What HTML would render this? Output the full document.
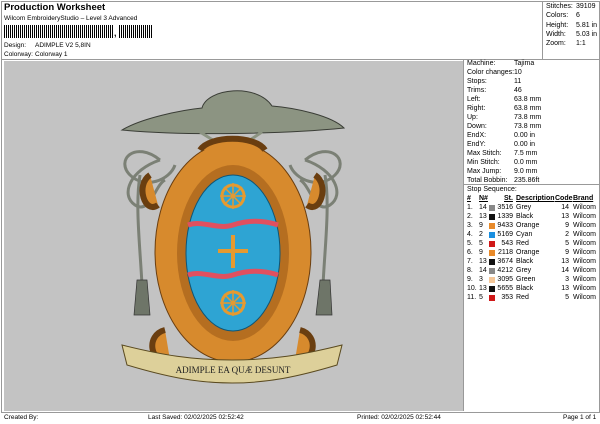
<!DOCTYPE html>
<html><head><meta charset="utf-8"><style>
body{margin:0;width:600px;height:424px;background:#fff;font-family:"Liberation Sans",Arial,sans-serif;position:relative;overflow:hidden;color:#000}
.a{position:absolute;white-space:nowrap}
.s{font-size:6.5px}
.r div{position:absolute;font-size:7px;white-space:nowrap}
.sw{display:inline-block;width:6px;height:6px;vertical-align:-1px}
</style></head><body>
<div class="a" style="left:1px;top:1px;width:597px;height:410px;border:1px solid #999"></div>
<div class="a" style="left:1px;top:59px;width:598px;border-top:1px solid #999"></div>
<div class="a" style="left:542px;top:1px;height:58px;border-left:1px solid #999"></div>
<div class="a" style="left:4px;top:2px;font-size:9.5px;font-weight:bold">Production Worksheet</div>
<div class="a s" style="left:4px;top:15px">Wilcom EmbroideryStudio – Level 3 Advanced</div>
<div class="a" style="left:4px;top:25px;width:109px;height:13px;background:repeating-linear-gradient(90deg,#000 0 1px,#fff 1px 2px,#000 2px 3px,#fff 3px 4px)"></div>
<div class="a" style="left:114px;top:28px;font-size:9px;font-weight:bold">,</div>
<div class="a" style="left:119px;top:25px;width:33px;height:13px;background:repeating-linear-gradient(90deg,#000 0 1px,#fff 1px 2px,#000 2px 3px,#fff 3px 4px)"></div>
<div class="a s" style="left:4px;top:42px">Design:</div><div class="a s" style="left:35px;top:42px">ADIMPLE V2 5,8IN</div>
<div class="a s" style="left:4px;top:51px">Colorway:</div><div class="a s" style="left:35px;top:51px">Colorway 1</div>
<div class="r">
<div style="left:546px;top:3px">Stitches:</div><div style="left:576px;top:3px">39109</div>
<div style="left:546px;top:12px">Colors:</div><div style="left:576px;top:12px">6</div>
<div style="left:546px;top:22px">Height:</div><div style="left:576px;top:22px">5.81 in</div>
<div style="left:546px;top:31px">Width:</div><div style="left:576px;top:31px">5.03 in</div>
<div style="left:546px;top:40px">Zoom:</div><div style="left:576px;top:40px">1:1</div>
</div>
<div class="a" style="left:4px;top:61px;width:459px;height:350px;background:#c3c3c3"></div>
<div class="a" style="left:463px;top:59px;height:352px;border-left:1px solid #999"></div>
<div class="a" style="left:463px;top:184px;width:136px;border-top:1px solid #999"></div>
<div class="a" style="left:1px;top:412px;width:598px;border-top:1px solid #999"></div>
<div class="a s" style="left:4px;top:414px">Created By:</div>
<div class="a s" style="left:148px;top:414px">Last Saved: 02/02/2025 02:52:42</div>
<div class="a s" style="left:357px;top:414px">Printed: 02/02/2025 02:52:44</div>
<div class="a s" style="left:563px;top:414px">Page 1 of 1</div>
<div class="r">
<div style="left:467px;top:60px">Machine:</div><div style="left:514px;top:60px">Tajima</div>
<div style="left:467px;top:69px">Color changes:</div><div style="left:514px;top:69px">10</div>
<div style="left:467px;top:78px">Stops:</div><div style="left:514px;top:78px">11</div>
<div style="left:467px;top:87px">Trims:</div><div style="left:514px;top:87px">46</div>
<div style="left:467px;top:96px">Left:</div><div style="left:514px;top:96px">63.8 mm</div>
<div style="left:467px;top:105px">Right:</div><div style="left:514px;top:105px">63.8 mm</div>
<div style="left:467px;top:114px">Up:</div><div style="left:514px;top:114px">73.8 mm</div>
<div style="left:467px;top:123px">Down:</div><div style="left:514px;top:123px">73.8 mm</div>
<div style="left:467px;top:132px">EndX:</div><div style="left:514px;top:132px">0.00 in</div>
<div style="left:467px;top:141px">EndY:</div><div style="left:514px;top:141px">0.00 in</div>
<div style="left:467px;top:150px">Max Stitch:</div><div style="left:514px;top:150px">7.5 mm</div>
<div style="left:467px;top:159px">Min Stitch:</div><div style="left:514px;top:159px">0.0 mm</div>
<div style="left:467px;top:168px">Max Jump:</div><div style="left:514px;top:168px">9.0 mm</div>
<div style="left:467px;top:177px">Total Bobbin:</div><div style="left:514px;top:177px">235.86ft</div>
<div style="left:467px;top:186px">Stop Sequence:</div>
<div style="left:467px;top:195px;font-weight:bold;text-decoration:underline">#</div>
<div style="left:479px;top:195px;font-weight:bold;text-decoration:underline">N#</div>
<div style="left:504px;top:195px;font-weight:bold;text-decoration:underline">St.</div>
<div style="left:516px;top:195px;font-weight:bold;text-decoration:underline">Description</div>
<div style="left:555px;top:195px;font-weight:bold;text-decoration:underline">Code</div>
<div style="left:573px;top:195px;font-weight:bold;text-decoration:underline">Brand</div>
</div>
<div class="r" id="t"></div>
<script>
var rows=[["1.","14","#888","3516","Grey"],["2.","13","#111","1339","Black"],["3.","9","#e88a2a","9433","Orange"],["4.","2","#1a8fe0","5169","Cyan"],["5.","5","#d01818","543","Red"],["6.","9","#e88a2a","2118","Orange"],["7.","13","#111","3674","Black"],["8.","14","#888","4212","Grey"],["9.","3","#f5c89a","3095","Green"],["10.","13","#111","5655","Black"],["11.","5","#d01818","353","Red"]];
var h="";rows.forEach(function(r,i){var y=204+i*9;
h+='<div style="left:467px;top:'+y+'px">'+r[0]+'</div><div style="left:479px;top:'+y+'px">'+r[1]+'</div><div style="left:489px;top:'+(y+1)+'px"><span class="sw" style="background:'+r[2]+'"></span></div><div style="left:497px;top:'+y+'px;width:16px;text-align:right">'+r[3]+'</div><div style="left:516px;top:'+y+'px">'+r[4]+'</div><div style="left:555px;top:'+y+'px;width:14px;text-align:right">'+r[1]+'</div><div style="left:573px;top:'+y+'px">Wilcom</div>';});
document.getElementById("t").innerHTML=h;
</script>
<svg class="a" style="left:0;top:0" width="600" height="424">
<g fill="none" stroke="#7b8075" stroke-width="3">
<path d="M160 160c-25-20-45 0-30 15s40 5 45-10M160 160c-30 10-40 35-25 45s20-20 30-25M305 160c25-20 45 0 30 15s-40 5-45-10M305 160c30 10 40 35 25 45s-20-20-30-25"/>
<path d="M140 175c-5 30 0 70 2 110M325 175c5 30 0 70-2 110"/>
</g>
<path d="M137 280h10l3 35h-16z" fill="#6e7568" stroke="#333" stroke-width=".7"/>
<path d="M320 280h10l2 35h-16z" fill="#6e7568" stroke="#333" stroke-width=".7"/>
<path d="M122 130c20-12 60-20 80-22 5-20 55-25 70-2 25 2 60 10 72 22-60 6-160 8-222 2z" fill="#8c9482" stroke="#3a3d36" stroke-width="1"/>
<path d="M200 132l32 20 30-20" fill="none" stroke="#8c9482" stroke-width="3"/>
<ellipse cx="233" cy="252" rx="78" ry="110" fill="#d78a2d" stroke="#6a3e10"/>
<path d="M150 175c-15 10-5 40 8 30M315 175c15 10 5 40-8 30M165 330c-20 5-15 35 5 30M300 330c20 5 15 35-5 30M200 150c10-15 55-15 65 0" fill="#d78a2d" stroke="#6a3e10" stroke-width="6"/>
<ellipse cx="233" cy="253" rx="56" ry="88" fill="#b56e20"/>
<ellipse cx="233" cy="253" rx="47" ry="78" fill="#2ea4d3" stroke="#0f5575"/>
<path d="M188 225c15-5 30 5 45 0s30-5 45 0" stroke="#e05060" stroke-width="5" fill="none"/>
<path d="M188 275c15-5 30 5 45 0s30-5 45 0" stroke="#e05060" stroke-width="5" fill="none"/>
<g stroke="#e59a30" stroke-width="4"><path d="M233 235v33M218 251h30"/></g>
<circle cx="233" cy="196" r="11" fill="none" stroke="#e59a30" stroke-width="3"/>
<circle cx="233" cy="303" r="11" fill="none" stroke="#e59a30" stroke-width="3"/>
<path d="M233 183v26M220 196h26M224 187l18 18M242 187l-18 18M233 290v26M220 303h26M224 294l18 18M242 294l-18 18" stroke="#e59a30" stroke-width="1.5"/>
<path d="M122 345c40 10 70 15 110 15s70-5 110-15l-5 20c-40 12-70 18-105 18s-65-6-105-18z" fill="#ddd09a" stroke="#5a4a20"/>
<text x="233" y="373" text-anchor="middle" font-family="Liberation Serif,serif" font-size="9" fill="#222">ADIMPLE EA QUÆ DESUNT</text>
</svg>
</body></html>
